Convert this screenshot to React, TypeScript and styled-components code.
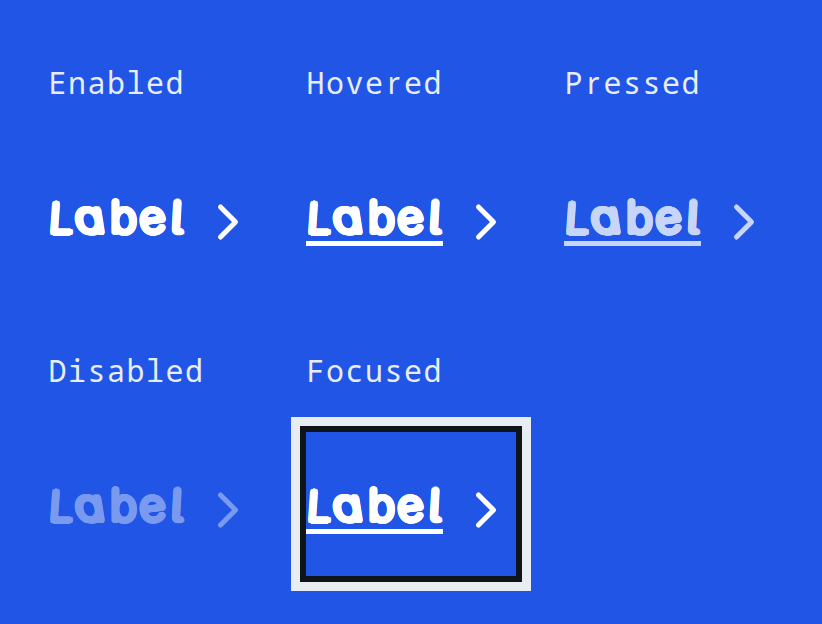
import React from "react";
import styled, { createGlobalStyle } from "styled-components";

const GlobalStyle = createGlobalStyle`
  body { margin: 0; background: #2055e5; }
`;

const Board = styled.main`
  box-sizing: border-box;
  width: 822px;
  height: 624px;
  padding: 0 0 0 48px;
  display: grid;
  grid-template-columns: repeat(3, 258px);
  grid-template-rows: 288px 288px;
  background: #2055e5;
  overflow: hidden;
`;

const Cell = styled.section`
  display: flex;
  flex-direction: column;
  align-items: flex-start;
`;

const Caption = styled.h2`
  margin: 0;
  padding: 65px 0 0 0.5px;
  height: 79px;
  font: 400 30px/36px "Noto Sans Mono", "DejaVu Sans Mono", monospace;
  letter-spacing: 1.5px;
  color: #e8edf3;
  white-space: pre;
`;

/* The sans r has no foot serif; it keeps the monospaced advance. */
const PlainR = styled.span`
  display: inline-block;
  box-sizing: border-box;
  width: 19.5px;
  padding-left: 3px;
  font-family: "Noto Sans", sans-serif;
  letter-spacing: 0;
`;

const LinkButton = styled.button<{ $tone: number; $focused?: boolean }>`
  box-sizing: border-box;
  width: 210px;
  height: 144px;
  margin: 0;
  padding: 0 6px 0 0;
  border: 0;
  display: flex;
  align-items: flex-start;
  justify-content: space-between;
  background: #2055e5;
  color: ${(p) => (p.$tone === 1 ? "#ffffff" : p.$tone === 0.75 ? "#c7d5f9" : "#7a9af0")};
  box-shadow: ${(p) => (p.$focused ? "0 0 0 6px #0f141b, 0 0 0 15px #e8edf1" : "none")};
`;

/* A ring of hard shadows gives the strokes their round ends. */
const roundedStroke = (radius: number) =>
  Array.from({ length: 20 }, (_, i) => {
    const angle = (i * Math.PI) / 10;
    return `${(Math.cos(angle) * radius).toFixed(2)}px ${(Math.sin(angle) * radius).toFixed(2)}px 0 currentColor`;
  }).join(", ");

const Label = styled.span<{ $underlined?: boolean }>`
  box-sizing: border-box;
  display: flex;
  width: 137px;
  height: 102px;
  padding: 46px 0 0 0;
  border-bottom: 5.5px solid ${(p) => (p.$underlined ? "currentColor" : "transparent")};
  font: 200 43px/52px Inter, sans-serif;
  font-feature-settings: "cv11", "cv05";
  text-align: center;
  white-space: nowrap;
  text-shadow: ${roundedStroke(2.7)};
`;

const Letter = styled.span<{ $width: number; $transform?: string }>`
  display: flex;
  justify-content: center;
  flex: 0 0 ${(p) => p.$width}px;
  transform: ${(p) => p.$transform ?? "none"};
  transform-origin: 50% 42px;
`;

const Chevron = styled.svg`
  width: 48px;
  height: 48px;
  margin-top: 54px;
`;

type State = { name: string; tone: number; underlined?: boolean; focused?: boolean };

const states: State[] = [
  { name: "Enabled", tone: 1 },
  { name: "Hovered", tone: 1, underlined: true },
  { name: "Pressed", tone: 0.75, underlined: true },
  { name: "Disabled", tone: 0.4 },
  { name: "Focused", tone: 1, underlined: true, focused: true },
];

const letters = [
  { char: "L", width: 26, transform: "translate(-0.5px, 1px) skewX(-4deg) scale(1, 0.95)" },
  { char: "a", width: 33, transform: "translate(1px, 0.5px) skewX(9deg) scaleX(1.14)" },
  { char: "b", width: 31, transform: "translate(1px, 0.7px) scaleX(1.03)" },
  { char: "e", width: 29, transform: "translate(1.5px, 0.5px) rotate(-7deg) scaleX(1.04)" },
  { char: "l", width: 17, transform: "translate(0.7px, 0.7px) skewX(-3deg) scaleX(1.1)" },
];

export default function App() {
  return (
    <>
      <GlobalStyle />
      <Board>
        {states.map((s) => (
          <Cell key={s.name}>
            <Caption>
              {s.name.split("").map((c, i) => (c === "r" ? <PlainR key={i}>r</PlainR> : c))}
            </Caption>
            <LinkButton $tone={s.tone} $focused={s.focused}>
              <Label $underlined={s.underlined}>
                {letters.map((l, i) => (
                  <Letter key={i} $width={l.width} $transform={l.transform}>
                    {l.char}
                  </Letter>
                ))}
              </Label>
              <Chevron viewBox="0 0 48 48" fill="none" aria-hidden="true">
                <path
                  d="M16.5 9 31.5 24 16.5 39"
                  stroke="currentColor"
                  strokeWidth="5"
                  strokeLinecap="round"
                  strokeLinejoin="round"
                />
              </Chevron>
            </LinkButton>
          </Cell>
        ))}
      </Board>
    </>
  );
}
